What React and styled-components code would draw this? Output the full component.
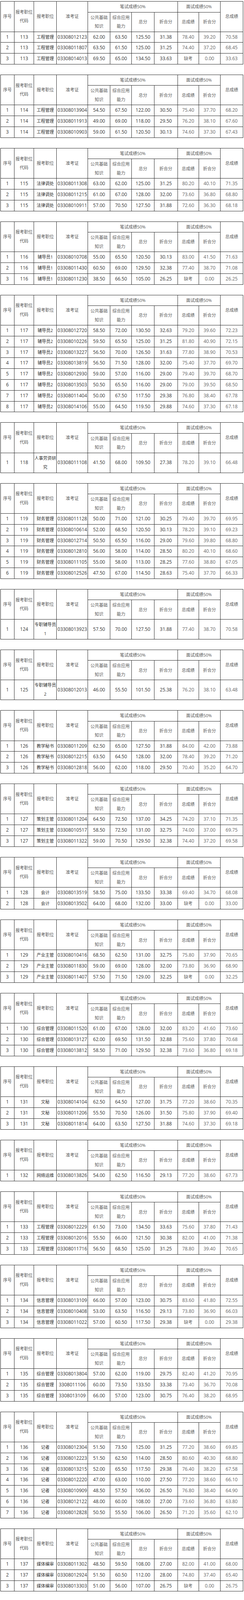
import React from "react";
import styled, { createGlobalStyle } from "styled-components";

const GlobalStyle = createGlobalStyle`
  html, body {
    margin: 0;
    padding: 0;
    background: #fff;
  }
`;

const Page = styled.main`
  width: 624px;
  padding: 3px 0 0 1px;
  box-sizing: border-box;
  display: flex;
  flex-direction: column;
  gap: 26px;
`;

const Table = styled.table`
  width: 621px;
  table-layout: fixed;
  border-collapse: collapse;
  border: 1px solid #1e1e1e;
  font-family: "Open Sans", "Noto Sans CJK SC", sans-serif;
  font-size: 11px;
`;

const HeadCell = styled.td`
  border: 1px solid #262626;
  padding: 2px 1px;
  font-family: "Open Sans", "Noto Sans CJK SC", sans-serif;
  font-size: 11px;
  line-height: 22.5px;
  text-align: center;
  vertical-align: middle;
  color: #5a5a5a;
  word-break: break-all;
`;

const Cell = styled.td`
  border: 1px solid #262626;
  padding: 2px 1px;
  font-family: "Open Sans", "Noto Sans CJK SC", sans-serif;
  font-size: ${(p) => (p.$text ? "11px" : "12px")};
  line-height: 22.8px;
  text-align: center;
  vertical-align: middle;
  color: ${(p) => (p.$soft ? "#666" : "#333")};
  white-space: ${(p) => (p.$text ? "normal" : "nowrap")};
  word-break: break-all;
`;

const widths = [35, 50, 58, 80, 57, 55, 57, 60, 54, 55, 58];

const groups = [
  ["113", "工程管理", [
    ["03308012123", "62.00", "63.50", "125.50", "31.38", "78.40", "39.20", "70.58"],
    ["03308011807", "63.50", "61.50", "125.00", "31.25", "74.40", "37.20", "68.45"],
    ["03308014013", "69.50", "65.00", "134.50", "33.63", "缺考", "0.00", "33.63"],
  ]],
  ["114", "工程管理", [
    ["03308013904", "54.50", "67.50", "122.00", "30.50", "75.40", "37.70", "68.20"],
    ["03308011913", "49.00", "69.00", "118.00", "29.50", "76.20", "38.10", "67.60"],
    ["03308010903", "59.00", "61.50", "120.50", "30.13", "74.60", "37.30", "67.43"],
  ]],
  ["115", "法律调处", [
    ["03308011308", "63.00", "62.00", "125.00", "31.25", "80.20", "40.10", "71.35"],
    ["03308011215", "61.00", "67.00", "128.00", "32.00", "73.60", "36.80", "68.80"],
    ["03308010911", "57.00", "70.50", "127.50", "31.88", "72.60", "36.30", "68.18"],
  ]],
  ["116", "辅导员1", [
    ["03308010708", "55.00", "65.50", "120.50", "30.13", "83.00", "41.50", "71.63"],
    ["03308011430", "60.50", "69.00", "129.50", "32.38", "77.40", "38.70", "71.08"],
    ["03308011230", "38.50", "66.50", "105.00", "26.25", "缺考", "0.00", "26.25"],
  ]],
  ["117", "辅导员2", [
    ["03308012720", "58.50", "72.00", "130.50", "32.63", "79.20", "39.60", "72.23"],
    ["03308010226", "59.50", "65.50", "125.00", "31.25", "81.80", "40.90", "72.15"],
    ["03308013227", "56.50", "70.00", "126.50", "31.63", "77.80", "38.90", "70.53"],
    ["03308013819", "56.50", "71.50", "128.00", "32.00", "75.40", "37.70", "69.70"],
    ["03308012930", "59.00", "57.00", "116.00", "29.00", "79.40", "39.70", "68.70"],
    ["03308013503", "50.50", "65.50", "116.00", "29.00", "79.00", "39.50", "68.50"],
    ["03308011404", "50.00", "67.50", "117.50", "29.38", "76.80", "38.40", "67.78"],
    ["03308014106", "55.00", "64.50", "119.50", "29.88", "74.60", "37.30", "67.18"],
  ]],
  ["118", "人事劳资研究", [
    ["03308011108", "41.50", "68.00", "109.50", "27.38", "78.20", "39.10", "66.48"],
  ]],
  ["119", "财务管理", [
    ["03308011128", "50.00", "71.00", "121.00", "30.25", "79.40", "39.70", "69.95"],
    ["03308010614", "52.00", "68.50", "120.50", "30.13", "78.20", "39.10", "69.23"],
    ["03308012714", "50.50", "65.50", "116.00", "29.00", "79.60", "39.80", "68.80"],
    ["03308012810", "56.00", "58.00", "114.00", "28.50", "80.20", "40.10", "68.60"],
    ["03308011105", "55.00", "58.00", "113.00", "28.25", "77.60", "38.80", "67.05"],
    ["03308012526", "47.50", "67.00", "114.50", "28.63", "75.40", "37.70", "66.33"],
  ]],
  ["124", "专职辅导员1", [
    ["03308013923", "57.50", "70.00", "127.50", "31.88", "77.40", "38.70", "70.58"],
  ]],
  ["125", "专职辅导员2", [
    ["03308012013", "46.00", "55.50", "101.50", "25.38", "76.20", "38.10", "63.48"],
  ]],
  ["126", "教学秘书", [
    ["03308011209", "62.50", "65.00", "127.50", "31.88", "84.00", "42.00", "73.88"],
    ["03308012215", "63.50", "64.50", "128.00", "32.00", "78.40", "39.20", "71.20"],
    ["03308012818", "56.00", "62.00", "118.00", "29.50", "70.40", "35.20", "64.70"],
  ]],
  ["127", "策划主管", [
    ["03308011204", "64.50", "72.50", "137.00", "34.25", "74.20", "37.10", "71.35"],
    ["03308010517", "58.50", "72.50", "131.00", "32.75", "74.00", "37.00", "69.75"],
    ["03308011322", "59.00", "70.50", "129.50", "32.38", "74.40", "37.20", "69.58"],
  ]],
  ["128", "会计", [
    ["03308013519", "58.50", "75.00", "133.50", "33.38", "69.40", "34.70", "68.08"],
    ["03308013502", "64.00", "68.00", "132.00", "33.00", "缺考", "0.00", "33.00"],
  ]],
  ["129", "产业主管", [
    ["03308010416", "68.50", "62.50", "131.00", "32.75", "75.80", "37.90", "70.65"],
    ["03308011830", "59.00", "69.00", "128.00", "32.00", "73.80", "36.90", "68.90"],
    ["03308011407", "57.50", "71.50", "129.00", "32.25", "缺考", "0.00", "32.25"],
  ]],
  ["130", "综合管理", [
    ["03308011520", "61.00", "67.00", "128.00", "32.00", "83.20", "41.60", "73.60"],
    ["03308013127", "62.00", "69.50", "131.50", "32.88", "75.60", "37.80", "70.68"],
    ["03308013812", "58.50", "71.00", "129.50", "32.38", "73.60", "36.80", "69.18"],
  ]],
  ["131", "文秘", [
    ["03308014104", "62.50", "64.50", "127.00", "31.75", "77.20", "38.60", "70.35"],
    ["03308011206", "55.50", "70.50", "126.00", "31.50", "75.80", "37.90", "69.40"],
    ["03308011814", "64.00", "63.50", "127.50", "31.88", "74.60", "37.30", "69.18"],
  ]],
  ["132", "网络运维", [
    ["03308013826", "54.00", "62.50", "116.50", "29.13", "77.20", "38.60", "67.73"],
  ]],
  ["133", "工程管理", [
    ["03308012229", "61.50", "73.00", "134.50", "33.63", "75.60", "37.80", "71.43"],
    ["03308012016", "55.50", "66.00", "121.50", "30.38", "82.00", "41.00", "71.38"],
    ["03308011716", "56.50", "68.50", "125.00", "31.25", "78.80", "39.40", "70.65"],
  ]],
  ["134", "信息管理", [
    ["03308013109", "66.00", "57.00", "123.00", "30.75", "83.60", "41.80", "72.55"],
    ["03308010408", "53.00", "63.50", "116.50", "29.13", "73.80", "36.90", "66.03"],
    ["03308011022", "57.00", "60.50", "117.50", "29.38", "缺考", "0.00", "29.38"],
  ]],
  ["135", "综合管理", [
    ["03308013804", "57.00", "62.00", "119.00", "29.75", "82.40", "41.20", "70.95"],
    ["3308011106", "60.00", "73.50", "133.50", "33.38", "73.40", "36.70", "70.08"],
    ["3308013109", "66.00", "57.00", "123.00", "30.75", "76.40", "38.20", "68.95"],
  ]],
  ["136", "记者", [
    ["03308012304", "51.50", "73.50", "125.00", "31.25", "77.20", "38.60", "69.85"],
    ["03308012223", "51.50", "62.50", "114.00", "28.50", "80.60", "40.30", "68.80"],
    ["03308013215", "52.00", "65.50", "117.50", "29.38", "76.40", "38.20", "67.58"],
    ["03308012220", "47.00", "63.00", "110.00", "27.50", "77.20", "38.60", "66.10"],
    ["03308010909", "48.50", "57.50", "106.00", "26.50", "76.80", "38.40", "64.90"],
    ["03308012122", "48.00", "60.00", "108.00", "27.00", "73.60", "36.80", "63.80"],
    ["03308012828", "50.50", "55.50", "106.00", "26.50", "71.20", "35.60", "62.10"],
  ]],
  ["137", "媒体编审", [
    ["03308011302", "48.50", "59.50", "108.00", "27.00", "82.00", "41.00", "68.00"],
    ["03308012924", "51.50", "60.50", "112.00", "28.00", "74.80", "37.40", "65.40"],
    ["03308013303", "51.00", "56.00", "107.00", "26.75", "缺考", "0.00", "26.75"],
  ]],
  ["138", "新媒体制作", [
    ["03308010806", "60.00", "66.00", "126.00", "31.50", "77.20", "38.60", "70.10"],
    ["03308013821", "46.50", "56.00", "102.50", "25.63", "83.20", "41.60", "67.23"],
    ["03308014114", "41.00", "65.50", "106.50", "26.63", "75.60", "37.80", "64.43"],
    ["03308011028", "44.50", "61.50", "106.00", "26.50", "65.60", "32.80", "59.30"],
  ]],
  ["139", "文化创意", [
    ["03308012914", "56.50", "64.00", "120.50", "30.13", "79.80", "39.90", "70.03"],
    ["03308010122", "51.50", "66.50", "118.00", "29.50", "75.60", "37.80", "67.30"],
  ]],
  ["141", "新闻采编", [
    ["03308010905", "58.00", "65.00", "123.00", "30.75", "85.80", "42.90", "73.65"],
    ["03308013807", "49.00", "72.50", "121.50", "30.38", "81.60", "40.80", "71.18"],
    ["03308010711", "51.00", "60.50", "111.50", "27.88", "82.00", "41.00", "68.88"],
    ["03308013002", "55.00", "56.00", "111.00", "27.75", "82.00", "41.00", "68.75"],
    ["03308013520", "48.00", "60.50", "108.50", "27.13", "78.20", "39.10", "66.23"],
    ["03308010825", "48.00", "69.50", "117.50", "29.38", "72.60", "36.30", "65.68"],
    ["03308011512", "50.00", "56.00", "106.00", "26.50", "76.60", "38.30", "64.80"],
    ["03308010119", "47.50", "60.50", "108.00", "27.00", "74.60", "37.30", "64.30"],
    ["03308012728", "49.50", "60.00", "109.50", "27.38", "70.80", "35.40", "62.78"],
  ]],
  ["143", "软件开发", [
    ["03308010828", "55.50", "62.00", "117.50", "29.38", "79.20", "39.60", "68.98"],
    ["03308012414", "53.50", "65.50", "119.00", "29.75", "75.20", "37.60", "67.35"],
    ["03308011217", "43.50", "56.50", "100.00", "25.00", "79.60", "39.80", "64.80"],
  ]],
];

function ScoreTable({ code, post, rows }) {
  return (
    <Table>
      <colgroup>
        {widths.map((w, i) => (
          <col key={i} style={{ width: w }} />
        ))}
      </colgroup>
      <tbody>
        <tr>
          <HeadCell rowSpan={2}>序号</HeadCell>
          <HeadCell rowSpan={2}>报考职位代码</HeadCell>
          <HeadCell rowSpan={2}>报考职位</HeadCell>
          <HeadCell rowSpan={2}>准考证</HeadCell>
          <HeadCell colSpan={4}>笔试成绩50%</HeadCell>
          <HeadCell colSpan={2}>面试成绩50%</HeadCell>
          <HeadCell rowSpan={2}>总成绩</HeadCell>
        </tr>
        <tr>
          <HeadCell>公共基础知识</HeadCell>
          <HeadCell>综合应用能力</HeadCell>
          <HeadCell>总分</HeadCell>
          <HeadCell>折合分</HeadCell>
          <HeadCell>总成绩</HeadCell>
          <HeadCell>折合分</HeadCell>
        </tr>
        {rows.map((r, i) => (
          <tr key={i}>
            <Cell>{i + 1}</Cell>
            <Cell>{code}</Cell>
            <Cell $text>{post}</Cell>
            {r.map((v, j) => (
              <Cell key={j} $soft={j >= 5} $text={v === "缺考"}>
                {v}
              </Cell>
            ))}
          </tr>
        ))}
      </tbody>
    </Table>
  );
}

export default function App() {
  return (
    <>
      <GlobalStyle />
      <Page>
        {groups.map(([code, post, rows]) => (
          <ScoreTable key={code} code={code} post={post} rows={rows} />
        ))}
      </Page>
    </>
  );
}
